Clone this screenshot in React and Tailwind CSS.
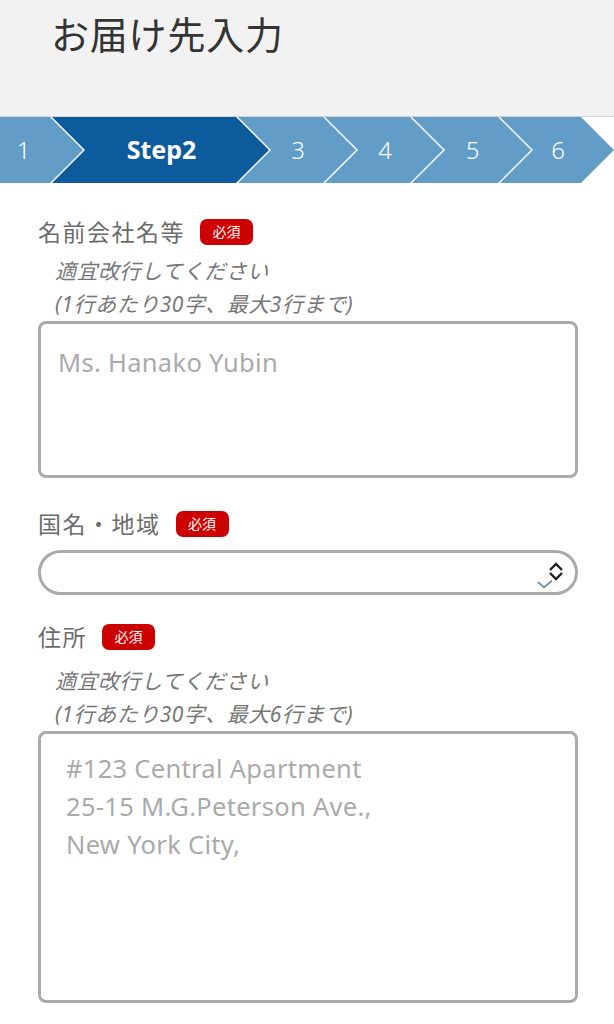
import React from "react";

const font = "font-['Noto_Sans','Noto_Sans_CJK_JP',sans-serif]";

// chevron shapes for the step bar
const first = "[clip-path:polygon(0_0,calc(100%_-_33px)_0,100%_50%,calc(100%_-_33px)_100%,0_100%)]";
const mid = "[clip-path:polygon(0_0,calc(100%_-_33px)_0,100%_50%,calc(100%_-_33px)_100%,0_100%,33px_50%)]";

function Badge() {
  return (
    <span className="ml-[15px] inline-flex h-[26px] w-[53px] items-center justify-center rounded-[7px] bg-[#cc0000] text-[14px] leading-none text-white">
      必須
    </span>
  );
}

function Label({ children }) {
  return (
    <div className="flex h-[30px] items-center">
      <span className="text-[23px] tracking-[1.5px] text-[#6b6b6b]">{children}</span>
      <Badge />
    </div>
  );
}

function Hint({ max }) {
  return (
    <div className="pl-[17px] text-[21px] italic leading-[33px] tracking-[0.5px] text-[#777]">
      <div>適宜改行してください</div>
      <div>(1行あたり30字、最大{max}行まで)</div>
    </div>
  );
}

export default function App() {
  return (
    <div className={`${font} min-h-[1024px] w-[614px] overflow-hidden bg-white`}>
      <header className="h-[117px] border-b border-[#d4d4d4] bg-[#f2f2f2] pl-[51px] pt-[6px]">
        <h1 className="text-[38px] font-normal leading-[56px] tracking-[0.8px] text-[#333]">
          お届け先入力
        </h1>
      </header>

      <nav className="flex h-[66px] text-white">
        <div className={`${first} flex w-[83px] shrink-0 items-center bg-[#629dc8] pl-[17px] text-[23px] font-light`}>
          1
        </div>
        <div className={`${mid} -ml-[31px] flex w-[217px] shrink-0 items-center justify-center bg-[#0b5b9d] pl-[2px] text-[25px] font-bold`}>
          Step2
        </div>
        {[
          ["3", "w-[118px]"],
          ["4", "w-[118px]"],
          ["5", "w-[119px]"],
          ["6", "w-[114px]"],
        ].map(([n, w]) => (
          <div
            key={n}
            className={`${mid} ${w} -ml-[31px] flex shrink-0 items-center justify-center bg-[#629dc8] pl-[2px] text-[24px] font-light`}
          >
            {n}
          </div>
        ))}
      </nav>

      <main className="pl-[38px] pr-[36px]">
        <div className="mt-[34px]">
          <Label>名前会社名等</Label>
        </div>
        <div className="mt-[8px]">
          <Hint max="3" />
        </div>
        <div className="h-[157px] rounded-[8px] border-[3px] border-[#aaa] px-[17px] pt-[19px] text-[25.5px] leading-[38px] tracking-[0.3px] text-[#aaa]">
          Ms. Hanako Yubin
        </div>

        <div className="mt-[31px]">
          <Label>国名・地域</Label>
        </div>
        <div className="mt-[11px] flex h-[45px] items-center justify-end rounded-full border-[3px] border-[#aaa] pr-[10px]">
          <svg width="32" height="32" viewBox="0 0 32 32" fill="none">
            <path d="M5 25l6 5.5 8-7" stroke="#7f909c" strokeWidth="1.8" />
            <path d="M17 13l6-6 6 6" stroke="#222" strokeWidth="2.4" />
            <path d="M17 16l6 6 6-6" stroke="#222" strokeWidth="2.4" />
          </svg>
        </div>

        <div className="mt-[27px]">
          <Label>住所</Label>
        </div>
        <div className="mt-[13px]">
          <Hint max="6" />
        </div>
        <div className="h-[272px] rounded-[8px] border-[3px] border-[#aaa] px-[25px] pt-[15px] text-[25.5px] leading-[38px] tracking-[0.3px] text-[#aaa]">
          <div>#123 Central Apartment</div>
          <div>25-15 M.G.Peterson Ave.,</div>
          <div>New York City,</div>
        </div>
      </main>
    </div>
  );
}
